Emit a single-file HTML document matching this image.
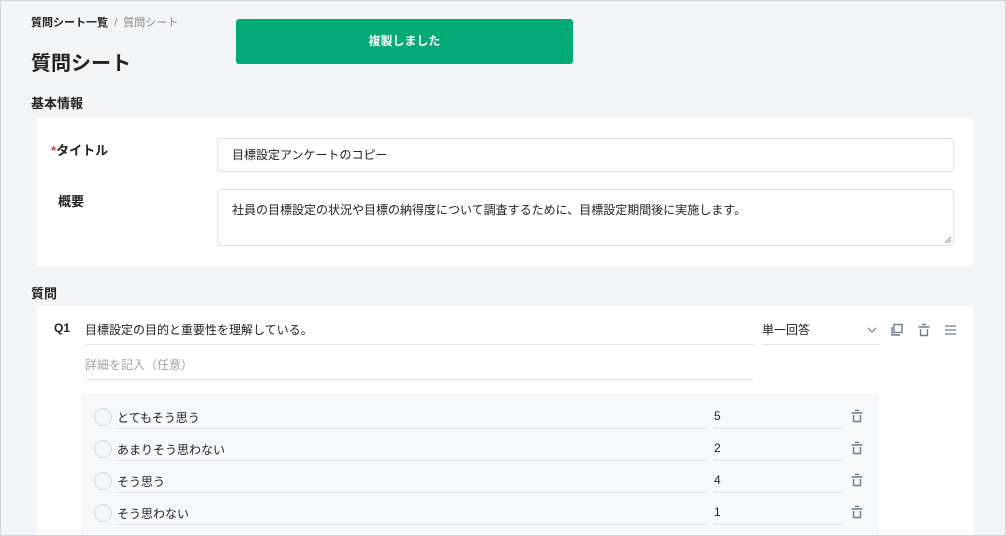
<!DOCTYPE html>
<html><head><meta charset="utf-8"><style>
*{box-sizing:border-box;margin:0;padding:0}
html{width:1006px;height:536px;overflow:hidden}
body{width:1006px;height:536px;overflow:hidden;background:#f3f4f6;font-family:"Liberation Sans","Noto Sans CJK JP",sans-serif;color:#222;position:relative}
.frame{position:absolute;left:0;top:0;width:1006px;height:536px;border:1px solid #cfd1d4;pointer-events:none;z-index:9}
.a{position:absolute;white-space:nowrap}
.card{position:absolute;background:#fff;border-radius:4px}
.inp{position:absolute;border:1px solid #dcdfe3;border-radius:4px;background:#fff;font-size:12px;padding-left:14px}
.ul{position:absolute;height:1px;background:#e2e4e8}
.radio{position:absolute;width:18px;height:18px;border-radius:50%;border:1.5px solid #d6d8db;background:#f4f5f6}
svg{position:absolute}
</style></head><body>
<div class="frame"></div>
<div class="a" style="left:31px;top:14px;font-size:11px;font-weight:bold">質問シート一覧 <span style="font-weight:normal;color:#888">&nbsp;/&nbsp; 質問シート</span></div>
<div class="a" style="left:31px;top:47px;font-size:20px;font-weight:bold">質問シート</div>
<div class="a" style="left:236px;top:19px;width:337px;height:45px;background:#03a977;border-radius:3px;color:#fff;font-size:12px;font-weight:bold;text-align:center;line-height:45px">複製しました</div>
<div class="a" style="left:31px;top:93px;font-size:13px;font-weight:bold">基本情報</div>
<div class="card" style="left:37px;top:118px;width:937px;height:148px"></div>
<div class="a" style="left:51px;top:140px;font-size:13px;font-weight:bold"><span style="color:#e53935">*</span>タイトル</div>
<div class="inp" style="left:217px;top:138px;width:737px;height:34px;line-height:32px">目標設定アンケートのコピー</div>
<div class="a" style="left:58px;top:191px;font-size:13px;font-weight:bold">概要</div>
<div class="inp" style="left:217px;top:189px;width:737px;height:57px;padding-top:12px;line-height:16px">社員の目標設定の状況や目標の納得度について調査するために、目標設定期間後に実施します。</div>
<svg style="left:944px;top:236px" width="8" height="8" viewBox="0 0 8 8" stroke="#999" stroke-width="1"><path d="M1 7L7 1M4 7L7 4"/></svg>
<div class="a" style="left:31px;top:283px;font-size:13px;font-weight:bold">質問</div>
<div class="card" style="left:37px;top:306px;width:937px;height:230px;border-radius:4px 4px 0 0"></div>
<div class="a" style="left:54px;top:321px;font-size:12px;font-weight:bold">Q1</div>
<div class="a" style="left:85px;top:321px;font-size:12px">目標設定の目的と重要性を理解している。</div>
<div class="ul" style="left:84px;top:344px;width:670px"></div>
<div class="a" style="left:762px;top:321px;font-size:12px">単一回答</div>
<div class="ul" style="left:762px;top:344px;width:118px"></div>
<svg style="left:867px;top:326px" width="10" height="8" viewBox="0 0 10 8"><path d="M1 2l4 4 4-4" fill="none" stroke="#7a8aa0" stroke-width="1.3"/></svg>
<svg style="left:890px;top:323px" width="14" height="14" viewBox="0 0 14 14" fill="none" stroke="#6b7c93" stroke-width="1.4"><rect x="4" y="1.5" width="8" height="8"/><path d="M2 4v8h8"/></svg>
<svg style="left:917px;top:323px" width="14" height="14" viewBox="0 0 14 14" fill="none" stroke="#6b7c93" stroke-width="1.4"><path d="M1.5 4h11M5 1.5h4M3.5 6v6.5h7V6"/></svg>
<svg style="left:944px;top:324px" width="13" height="12" viewBox="0 0 13 12" fill="none" stroke="#6b7c93" stroke-width="1.3"><path d="M1 2h11M1 6h11M1 10h11"/></svg>
<div class="a" style="left:85px;top:356px;font-size:12px;color:#a0a4aa">詳細を記入（任意）</div>
<div class="ul" style="left:84px;top:379px;width:670px"></div>
<div class="a" style="left:81px;top:393px;width:798px;height:143px;background:#f7f8fa;border-radius:4px 4px 0 0"></div>
<div id="rows"></div>
<script>
var d=[["とてもそう思う","5"],["あまりそう思わない","2"],["そう思う","4"],["そう思わない","1"]],h="";
d.forEach(function(r,i){var y=417+i*32;
h+='<div class="radio" style="left:94px;top:'+(y-9)+'px"></div>'+
'<div class="a" style="left:117px;top:'+(y-8)+'px;font-size:12px">'+r[0]+'</div>'+
'<div class="ul" style="left:116px;top:'+(y+11)+'px;width:590px"></div>'+
'<div class="a" style="left:714px;top:'+(y-8)+'px;font-size:12px">'+r[1]+'</div>'+
'<div class="ul" style="left:714px;top:'+(y+11)+'px;width:128px"></div>'+
'<svg style="left:850px;top:'+(y-8)+'px" width="14" height="14" viewBox="0 0 14 14" fill="none" stroke="#6b7c93" stroke-width="1.4"><path d="M1.5 4h11M5 1.5h4M3.5 6v6.5h7V6"/></svg>';});
document.getElementById("rows").innerHTML=h;
</script>
</body></html>
